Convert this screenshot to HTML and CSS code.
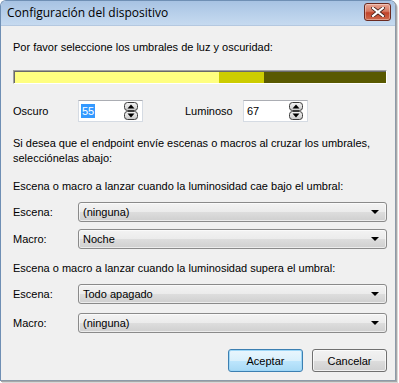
FILE: index.html
```html
<!DOCTYPE html>
<html lang="es">
<head>
<meta charset="utf-8">
<title>Configuración del dispositivo</title>
<link rel="stylesheet" href="styles.css">
</head>
<body>
<div class="window">
  <div class="titlebar">
    <span class="title">Configuración del dispositivo</span>
    <span class="close">
      <svg width="14" height="10" viewBox="0 0 14 10"><path d="M2 1 L12 9 M12 1 L2 9" stroke="#3b1a14" stroke-width="3.6" stroke-linecap="square"/><path d="M2 1 L12 9 M12 1 L2 9" stroke="#ffffff" stroke-width="2.2" stroke-linecap="square"/></svg>
    </span>
  </div>
  <div class="client">
    <p class="text intro">Por favor seleccione los umbrales de luz y oscuridad:</p>
    <div class="bar">
      <div class="seg light" style="width:204px"></div>
      <div class="seg mid" style="width:45px"></div>
      <div class="seg dark"></div>
    </div>
    <div class="spin-row">
      <span class="text lbl">Oscuro</span>
      <div class="spin"><span class="val sel">55</span><span class="spinbtn"><svg width="14" height="18" viewBox="0 0 14 18"><defs><linearGradient id="g1" x1="0" y1="0" x2="0" y2="1"><stop offset="0" stop-color="#f6f6f6"/><stop offset="1" stop-color="#c8c8c8"/></linearGradient></defs><rect x="0.5" y="0.5" width="13" height="8" rx="3" fill="url(#g1)" stroke="#3c3c3c"/><rect x="0.5" y="9.5" width="13" height="8" rx="3" fill="url(#g1)" stroke="#3c3c3c"/><path d="M3.5 6.5 L7 2.5 L10.5 6.5 Z" fill="#000"/><path d="M3.5 11.5 L7 15.5 L10.5 11.5 Z" fill="#000"/></svg></span></div>
      <span class="text lbl lbl2">Luminoso</span>
      <div class="spin"><span class="val">67</span><span class="spinbtn"><svg width="14" height="18" viewBox="0 0 14 18"><rect x="0.5" y="0.5" width="13" height="8" rx="3" fill="url(#g1)" stroke="#3c3c3c"/><rect x="0.5" y="9.5" width="13" height="8" rx="3" fill="url(#g1)" stroke="#3c3c3c"/><path d="M3.5 6.5 L7 2.5 L10.5 6.5 Z" fill="#000"/><path d="M3.5 11.5 L7 15.5 L10.5 11.5 Z" fill="#000"/></svg></span></div>
    </div>
    <p class="text para">Si desea que el endpoint envíe escenas o macros al cruzar los umbrales,<br>selecciónelas abajo:</p>
    <p class="text section">Escena o macro a lanzar cuando la luminosidad cae bajo el umbral:</p>
    <div class="field first"><span class="text lbl">Escena:</span><div class="combo"><span class="text">(ninguna)</span><span class="arrow"></span></div></div>
    <div class="field second"><span class="text lbl">Macro:</span><div class="combo"><span class="text">Noche</span><span class="arrow"></span></div></div>
    <p class="text section section2">Escena o macro a lanzar cuando la luminosidad supera el umbral:</p>
    <div class="field first"><span class="text lbl">Escena:</span><div class="combo"><span class="text">Todo apagado</span><span class="arrow"></span></div></div>
    <div class="field third"><span class="text lbl">Macro:</span><div class="combo"><span class="text">(ninguna)</span><span class="arrow"></span></div></div>
    <div class="buttons">
      <span class="btn default">Aceptar</span>
      <span class="btn">Cancelar</span>
    </div>
  </div>
</div>
</body>
</html>
```

FILE: styles.css
```css
* { box-sizing: border-box; }
html, body { margin: 0; padding: 0; }
body {
  width: 399px;
  height: 383px;
  background: #ffffff;
  font-family: "Liberation Sans", Arial, sans-serif;
  overflow: hidden;
}
.window {
  width: 396px;
  height: 381px;
  border: 1px solid #6f8fb4;
  border-right-color: #8d9aa8;
  border-bottom-color: #8d9aa8;
  border-radius: 6px 6px 0 0;
  box-shadow: 1px 1px 0 #a8a8a8, 2px 2px 0 #d8d8d8;
  background: #f0f0f0;
  display: flex;
  flex-direction: column;
  overflow: hidden;
}
.titlebar {
  height: 25px;
  flex: none;
  background: linear-gradient(to bottom, #a7c2e2 0%, #b7cfea 50%, #c6daf0 100%);
  display: flex;
  align-items: center;
  padding-left: 6px;
  padding-right: 4px;
  border-bottom: 1px solid #b4c8e0;
}
.title {
  font-family: "Open Sans", "Noto Sans", sans-serif;
  font-size: 12px;
  color: #000;
  flex: 1;
  margin-top: -1px;
}
.close {
  width: 27px;
  height: 18px;
  margin-top: -2px;
  border: 1px solid #6b2a20;
  border-radius: 3px;
  background: linear-gradient(to bottom, #e8a593 0%, #d77a63 45%, #c1432a 55%, #cf6a4c 100%);
  box-shadow: inset 0 0 0 1px rgba(255,255,255,0.35);
  display: flex;
  align-items: center;
  justify-content: center;
}
.close svg { display: block; }
.client {
  flex: 1;
  padding: 0 0 0 12px;
  display: flex;
  flex-direction: column;
}
.text {
  font-size: 11px;
  line-height: 15px;
  color: #000;
}
p { margin: 0; }
.intro { margin-top: 14px; }
.bar {
  margin-top: 15px;
  width: 374px;
  height: 14px;
  border: 1px solid #ffffff;
  border-top-color: #a0a0a0;
  border-left-color: #a0a0a0;
  box-shadow: inset 1px 1px 0 #696969;
  display: flex;
  padding: 1px 0 0 1px;
}
.seg { height: 100%; }
.seg.light { background: #ffff80; }
.seg.mid { background: #cccc00; }
.seg.dark { background: #595900; flex: 1; }
.spin-row {
  margin-top: 16px;
  height: 22px;
  display: flex;
  align-items: center;
}
.spin-row .lbl { width: 65px; }
.spin-row .lbl2 { width: 58px; margin-left: 42px; }
.spin {
  width: 65px;
  height: 22px;
  background: #ffffff;
  border: 1px solid #d5dbe3;
  border-top-color: #abadb3;
  display: flex;
  align-items: center;
  justify-content: space-between;
  padding: 0 4px 0 2px;
}
.val {
  font-size: 11px;
  line-height: 14px;
  padding: 0 1px;
  color: #000;
}
.val.sel { background: #3399ff; color: #fff; }
.spinbtn { display: flex; }
.spinbtn svg { display: block; }
.para { margin-top: 14px; }
.section { margin-top: 13px; }
.section2 { margin-top: 12px; }
.field {
  display: flex;
  align-items: center;
  height: 20px;
}
.field.first { margin-top: 8px; }
.field.second { margin-top: 7px; }
.field.third { margin-top: 9px; }
.field .lbl { width: 65px; }
.combo {
  width: 309px;
  height: 20px;
  border: 1px solid #8a8a8a;
  border-radius: 3px;
  background: linear-gradient(to bottom, #f3f3f3 0%, #ebebeb 50%, #dddddd 51%, #cfcfcf 100%);
  box-shadow: inset 0 0 0 1px rgba(255,255,255,0.6);
  display: flex;
  align-items: center;
  justify-content: space-between;
  padding: 0 6px 0 4px;
}
.arrow {
  width: 0;
  height: 0;
  border-left: 4px solid transparent;
  border-right: 4px solid transparent;
  border-top: 4px solid #000;
  margin-right: 1px;
}
.buttons {
  margin-top: 16px;
  width: 374px;
  display: flex;
  justify-content: flex-end;
  gap: 9px;
  padding-right: 0;
}
.btn {
  width: 75px;
  height: 23px;
  border: 1px solid #707070;
  border-radius: 3px;
  background: linear-gradient(to bottom, #f2f2f2 0%, #ebebeb 50%, #dddddd 51%, #cfcfcf 100%);
  box-shadow: inset 0 0 0 1px rgba(255,255,255,0.7);
  font-size: 11px;
  color: #000;
  display: flex;
  align-items: center;
  justify-content: center;
}
.btn.default {
  border-color: #3c7fb1;
  background: linear-gradient(to bottom, #eaf6fd 0%, #d9f0fc 50%, #bee6fd 51%, #a7d9f5 100%);
  box-shadow: inset 0 0 0 1px #9ed7f7;
}
```
